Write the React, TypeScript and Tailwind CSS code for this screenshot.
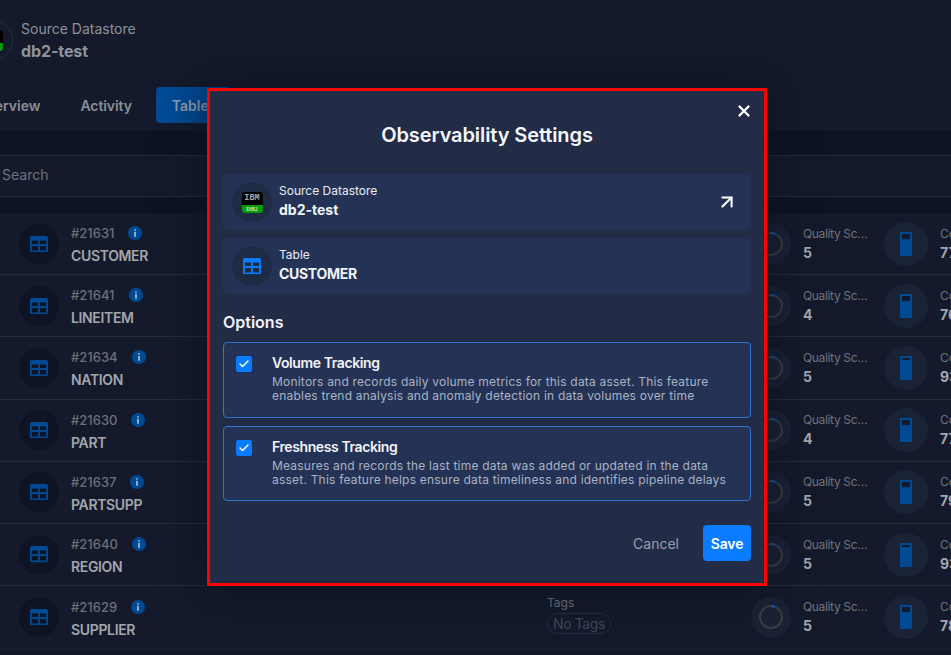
import React from 'react';
import { X, ArrowUpRight, Check } from 'lucide-react';

interface TableRow {
  id: string;
  name: string;
  score: number;
  completeness: number;
}

const rows: TableRow[] = [
  { id: '#21631', name: 'CUSTOMER', score: 5, completeness: 77 },
  { id: '#21641', name: 'LINEITEM', score: 4, completeness: 76 },
  { id: '#21634', name: 'NATION', score: 5, completeness: 93 },
  { id: '#21630', name: 'PART', score: 4, completeness: 77 },
  { id: '#21637', name: 'PARTSUPP', score: 5, completeness: 79 },
  { id: '#21640', name: 'REGION', score: 5, completeness: 93 },
  { id: '#21629', name: 'SUPPLIER', score: 5, completeness: 78 },
];

const TableIcon = ({ color, size = 18 }: { color: string; size?: number }) => (
  <svg width={size} height={size * 0.9} viewBox="0 0 20 18" fill={color}>
    <path
      fillRule="evenodd"
      d="M2 0h16a2 2 0 0 1 2 2v14a2 2 0 0 1-2 2H2a2 2 0 0 1-2-2V2a2 2 0 0 1 2-2zm0 5v4h7V5H2zm9 0v4h7V5h-7zm-9 6v5h7v-5H2zm9 0v5h7v-5h-7z"
    />
  </svg>
);

const InfoDot = () => (
  <svg width="14" height="14" viewBox="0 0 14 14">
    <circle cx="7" cy="7" r="7" fill="#004a94" />
    <rect x="6.1" y="3" width="1.8" height="1.8" rx="0.9" fill="#9fb4cc" />
    <rect x="6.1" y="5.8" width="1.8" height="5" fill="#9fb4cc" />
  </svg>
);

const ScoreRing = () => (
  <svg width="24" height="24" viewBox="0 0 24 24" fill="none">
    <circle cx="12" cy="12" r="11" stroke="#3d3d40" strokeWidth="2" />
    <path d="M12 1a11 11 0 0 1 4 .75" stroke="#0a5bb0" strokeWidth="2" />
  </svg>
);

// dark notch at the top grows as the value falls
const Gauge = ({ value }: { value: number }) => {
  const notch = Math.max(2, Math.round((100 - value) * 0.22));
  return (
    <svg width="12" height="24" viewBox="0 0 12 24">
      <rect width="12" height="24" fill="#004a94" />
      <rect x="2" y="2" width="8" height={notch} fill="#141a2b" />
    </svg>
  );
};

const Db2Logo = () => (
  <div className="flex h-[21px] w-[21px] flex-col overflow-hidden rounded-[3px] bg-black">
    <span className="flex h-[13px] items-center justify-center font-['Liberation_Mono',monospace] text-[8.5px] leading-none font-bold text-[#a8a8a8]">
      IBM
    </span>
    <span className="flex h-[8px] items-center justify-center bg-[#0a9a0a] font-['Liberation_Serif',serif] text-[6px] leading-none font-bold text-[#c8f0c8]">
      DB2
    </span>
  </div>
);

const OptionCard = ({ title, lines, height }: { title: string; lines: string[]; height: string }) => (
  <div className={`flex rounded-[4px] border border-[#2f74d0] bg-[#243355] pt-[13px] pl-[12px] ${height}`}>
    <span className="flex h-4 w-4 items-center justify-center rounded-[2px] bg-[#0a7cff]">
      <Check className="h-3 w-3 text-white" strokeWidth={3} />
    </span>
    <div className="ml-5">
      <p className="-mt-px text-[14px] leading-[16px] font-semibold tracking-[-0.4px] text-[#f1f3f7]">{title}</p>
      <p className="mt-[4px] text-[12px] leading-[14px] tracking-[0.21px] whitespace-nowrap text-[#a9b2c3]">
        {lines[0]}
        <br />
        {lines[1]}
      </p>
    </div>
  </div>
);

export default function App() {
  return (
    <div className="relative h-[655px] w-[951px] overflow-hidden bg-[#141a2b] font-['Inter',sans-serif]">
      {/* Page header */}
      <div className="-ml-[37px] flex h-[87px] items-start pt-[19px] pl-[8px]">
        <div className="flex h-[42px] w-[42px] items-center justify-center rounded-full border border-[#262d40]">
          <Db2Logo />
        </div>
        <div className="ml-[8px]">
          <p className="text-[14px] leading-[20px] text-[#8e9299]">Source Datastore</p>
          <p className="mt-[2px] text-[16px] leading-[21px] font-bold tracking-[-0.1px] text-[#8e9299]">db2-test</p>
        </div>
      </div>

      {/* Tabs */}
      <div className="-ml-[24px] flex h-[44px] items-start">
        <span className="flex h-9 items-center text-[14px] font-semibold text-[#8a8e96]">Overview</span>
        <span className="ml-[40px] flex h-9 items-center text-[14px] font-semibold tracking-[-0.1px] text-[#8a8e96]">Activity</span>
        <span className="ml-[24px] flex h-9 w-[75px] items-center rounded-[4px] bg-[#004a94] pl-4 text-[14px] font-semibold text-[#8a9bb0]">
          Tables
        </span>
      </div>

      {/* Search strip */}
      <div className="h-[82px] bg-[#0d1322] pt-[24px]">
        <div className="flex h-[42px] items-center border-y border-[#232938] bg-[#141a2b] pb-[3px] pl-[2px] text-[14px] text-[#6f747d]">
          Search
        </div>
      </div>

      {/* Table rows */}
      <div className="border-b border-[#1a2030]">
        {rows.map((row) => (
          <div
            key={row.id}
            className="grid h-[62.2px] grid-cols-[547px_204px_133px_1fr] items-center border-b border-[#262c3b] last:border-b-0"
          >
            <div className="flex items-center pl-[19px]">
              <div className="flex h-10 w-10 items-center justify-center rounded-full bg-[#0e1423]">
                <TableIcon color="#004a94" />
              </div>
              <div className="mt-[3px] ml-3">
                <div className="flex items-center">
                  <span className="text-[13px] leading-[16px] font-medium text-[#6b6f78]">{row.id}</span>
                  <span className="ml-[14px]">
                    <InfoDot />
                  </span>
                </div>
                <p className="mt-[6px] text-[14px] leading-[18px] font-semibold tracking-[-0.35px] text-[#a3a6ac]">{row.name}</p>
              </div>
            </div>
            <div className="-mt-[3px]">
              <p className="text-[12px] leading-[14px] text-[#6f737c]">Tags</p>
              <span className="mt-[3px] inline-block rounded-full border border-[#262d40] px-[5px] text-[14px] leading-[19px] tracking-[-0.4px] text-[#3f4659]">
                No Tags
              </span>
            </div>
            <div className="flex items-center">
              <div className="flex h-10 w-10 items-center justify-center rounded-full bg-[#1a2236]">
                <ScoreRing />
              </div>
              <div className="ml-3 min-w-0">
                <p className="w-[71px] truncate text-[12px] leading-[16px] tracking-[-0.35px] text-[#6f737c]">Quality Score</p>
                <p className="mt-[2px] text-[14px] leading-[18px] font-bold text-[#a3a6ac]">{row.score}</p>
              </div>
            </div>
            <div className="flex items-center">
              <div className="flex h-11 w-11 shrink-0 items-center justify-center rounded-full bg-[#1a2236]">
                <Gauge value={row.completeness} />
              </div>
              <div className="ml-3">
                <p className="text-[12px] leading-[16px] text-[#6f737c]">Completeness</p>
                <p className="mt-[2px] text-[14px] leading-[18px] font-bold text-[#a3a6ac]">{row.completeness}%</p>
              </div>
            </div>
          </div>
        ))}
      </div>

      {/* Observability Settings modal */}
      <div className="absolute top-[88px] left-[207px] box-border h-[498px] w-[560px] border-[3px] border-[#ff0000] bg-[#232c47] px-[13px] shadow-[0_0_40px_rgba(10,14,26,0.7)]">
        <button className="absolute top-[11px] right-[11px] text-white">
          <X className="h-[18px] w-[18px]" strokeWidth={3} />
        </button>
        <h2 className="pt-[30px] text-center text-[20px] leading-[28px] font-semibold tracking-[-0.1px] text-[#f5f6f9]">
          Observability Settings
        </h2>

        <div className="mt-[25px] flex h-14 items-center rounded-[6px] bg-[#243355] pr-[13px] pl-[9px]">
          <div className="flex h-10 w-10 items-center justify-center rounded-full bg-[#1f2a45]">
            <Db2Logo />
          </div>
          <div className="-mt-[2px] ml-[7px] flex-1">
            <p className="text-[12px] leading-[16px] text-[#e8ebf1]">Source Datastore</p>
            <p className="mt-[2px] text-[14px] leading-[18px] font-bold text-[#f1f3f7]">db2-test</p>
          </div>
          <ArrowUpRight className="h-[22px] w-[22px] text-white" strokeWidth={2.2} />
        </div>

        <div className="mt-2 flex h-14 items-center rounded-[6px] bg-[#243355] pl-[9px]">
          <div className="flex h-10 w-10 items-center justify-center rounded-full bg-[#1f2a45]">
            <TableIcon color="#0a7cff" />
          </div>
          <div className="-mt-[2px] ml-[7px]">
            <p className="text-[12px] leading-[16px] text-[#e8ebf1]">Table</p>
            <p className="mt-[2px] text-[14px] leading-[18px] font-bold tracking-[-0.3px] text-[#f1f3f7]">CUSTOMER</p>
          </div>
        </div>

        <h3 className="mt-[18px] text-[16px] leading-[20px] font-semibold text-[#f1f3f7]">Options</h3>

        <div className="mt-[10px] flex flex-col gap-2">
          <OptionCard
            title="Volume Tracking"
            height="h-[76px]"
            lines={[
              'Monitors and records daily volume metrics for this data asset. This feature',
              'enables trend analysis and anomaly detection in data volumes over time',
            ]}
          />
          <OptionCard
            title="Freshness Tracking"
            height="h-[75px]"
            lines={[
              'Measures and records the last time data was added or updated in the data',
              'asset. This feature helps ensure data timeliness and identifies pipeline delays',
            ]}
          />
        </div>

        <div className="mt-6 flex items-center justify-end">
          <button className="text-[14px] text-[#9a9ea8]">Cancel</button>
          <button className="ml-6 h-9 w-12 rounded-[4px] bg-[#0a7cff] text-[14px] font-semibold tracking-[-0.1px] text-white">
            Save
          </button>
        </div>
      </div>
    </div>
  );
}
